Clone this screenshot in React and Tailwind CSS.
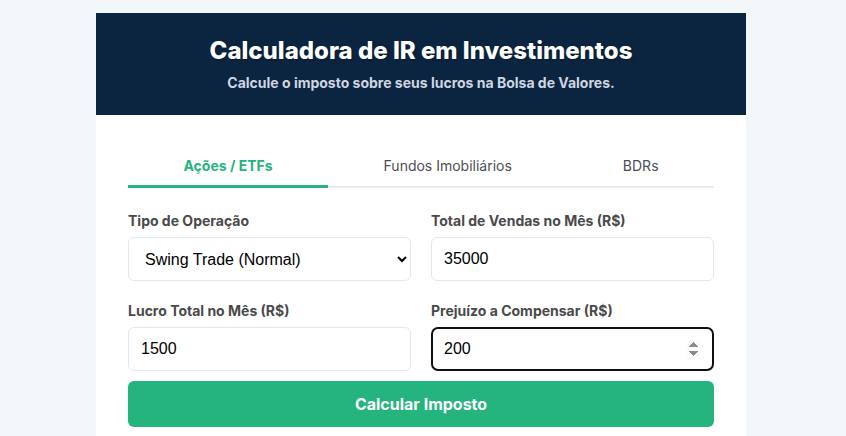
import React, { useState } from 'react';

const tabs = ['Ações / ETFs', 'Fundos Imobiliários', 'BDRs'];

const Field = ({ label, children }) => (
  <div className="flex flex-col">
    <label className="mb-[6px] text-sm font-bold text-[#4a4a4a]">{label}</label>
    {children}
  </div>
);

const inputCls =
  "h-[44px] w-full rounded-md border border-[#e3e8ef] bg-white px-3 text-base text-black font-['Liberation_Sans',Arial,sans-serif]";

export default function App() {
  const [tab, setTab] = useState(0);
  const [tipo, setTipo] = useState('swing');
  const [vendas, setVendas] = useState('35000');
  const [lucro, setLucro] = useState('1500');
  const [prejuizo, setPrejuizo] = useState('200');

  return (
    <div className="min-h-screen bg-[#f4f7fa] pt-[13px] pr-[4px] font-['Inter','Noto_Sans',sans-serif]">
      <div className="mx-auto w-[650px] bg-white">
        <div className="flex h-[102px] flex-col items-center bg-[#0b2540] pt-[22px]">
          <h1 className="text-2xl font-extrabold text-white [text-shadow:1px_1px_2px_rgba(0,0,0,0.3)]">
            Calculadora de IR em Investimentos
          </h1>
          <p className="mt-[6px] text-sm font-bold text-[#cfd6e0]">
            Calcule o imposto sobre seus lucros na Bolsa de Valores.
          </p>
        </div>

        <div className="px-8 pt-[33px] pb-[9px]">
          <div className="flex border-b-2 border-[#e8ebf0]">
            {tabs.map((t, i) => (
              <button
                key={t}
                onClick={() => setTab(i)}
                className={
                  i === tab
                    ? 'mb-[-2px] grow border-b-[3px] border-[#25b37e] pt-[8px] pb-[9px] text-sm font-bold text-[#25b37e]'
                    : 'mb-[-2px] grow border-b-[3px] border-transparent pt-[8px] pb-[9px] text-sm text-[#4b4f55]'
                }
              >
                {t}
              </button>
            ))}
          </div>

          <div className="mt-[23px] grid grid-cols-2 gap-x-5 gap-y-5">
            <Field label="Tipo de Operação">
              <select value={tipo} onChange={(e) => setTipo(e.target.value)} className={inputCls}>
                <option value="swing">Swing Trade (Normal)</option>
                <option value="day">Day Trade</option>
              </select>
            </Field>
            <Field label="Total de Vendas no Mês (R$)">
              <input type="number" value={vendas} onChange={(e) => setVendas(e.target.value)} className={inputCls} />
            </Field>
            <Field label="Lucro Total no Mês (R$)">
              <input type="number" value={lucro} onChange={(e) => setLucro(e.target.value)} className={inputCls} />
            </Field>
            <Field label="Prejuízo a Compensar (R$)">
              <input
                type="number"
                autoFocus
                value={prejuizo}
                onChange={(e) => setPrejuizo(e.target.value)}
                className={inputCls}
              />
            </Field>
          </div>

          <button className="mt-[10px] h-[46px] w-full rounded-md bg-[#25b37e] text-base font-bold text-white">
            Calcular Imposto
          </button>
        </div>
      </div>
    </div>
  );
}
